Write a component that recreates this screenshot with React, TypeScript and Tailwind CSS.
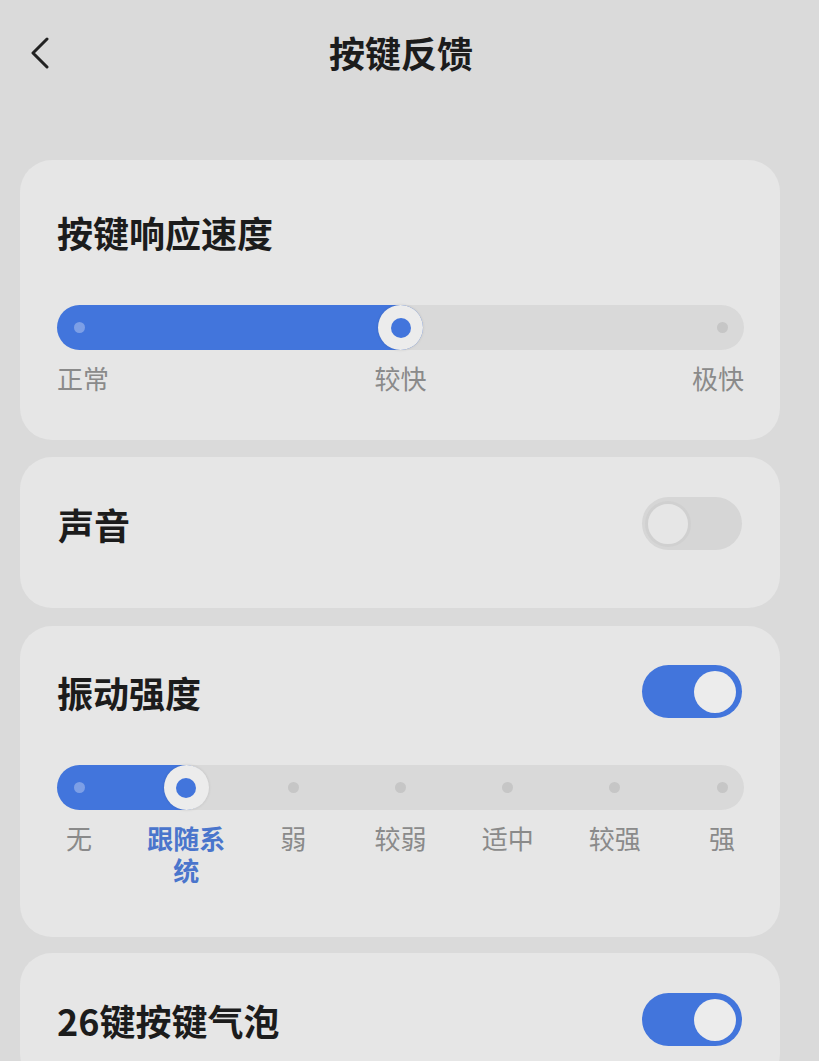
import React from "react"

function Toggle({ on }: { on: boolean }) {
  return on ? (
    <div className="w-[100px] h-[53px] rounded-full bg-[#4275dc] flex items-center justify-end pr-[6px] shrink-0">
      <div className="w-[42px] h-[42px] rounded-full bg-[#ececec]" />
    </div>
  ) : (
    <div className="w-[100px] h-[53px] rounded-full bg-[#d6d6d6] flex items-center pl-[3px] shrink-0">
      <div className="w-[46px] h-[46px] rounded-full bg-[#e6e6e6] border-[3px] border-[#d0d0d0]" />
    </div>
  )
}

function Slider({ stops, value }: { stops: number; value: number }) {
  const W = 687
  const pos = (i: number) => 22 + (i * (W - 44)) / (stops - 1)
  return (
    <div className="relative h-[45px] w-[687px] rounded-full bg-[#d9d9d9]">
      <div
        className="absolute left-0 top-0 h-full rounded-full bg-[#4275dc]"
        style={{ width: pos(value) + 22 }}
      />
      {Array.from({ length: stops }).map((_, i) =>
        i === value ? null : (
          <div
            key={i}
            className={
              "absolute top-1/2 w-[11px] h-[11px] -ml-[5.5px] -mt-[5.5px] rounded-full " +
              (i < value ? "bg-[#7d9fe6]" : "bg-[#c6c6c6]")
            }
            style={{ left: pos(i) }}
          />
        )
      )}
      <div
        className="absolute top-0 w-[45px] h-[45px] -ml-[22.5px] rounded-full bg-[#ececec] shadow-[0_0_3px_rgba(0,0,0,0.12)] flex items-center justify-center"
        style={{ left: pos(value) }}
      >
        <div className="w-[20px] h-[20px] rounded-full bg-[#4275dc]" />
      </div>
    </div>
  )
}

const vibLabels = ["无", "跟随系统", "弱", "较弱", "适中", "较强", "强"]

export default function App() {
  return (
    <div
      className="min-h-screen w-[819px] bg-[#dadada] overflow-hidden"
      style={{ fontFamily: '"Noto Sans CJK SC", "Noto Sans", sans-serif' }}
    >
      {/* Header */}
      <header className="relative h-[160px] pt-[28px]">
        <div className="flex h-[48px] items-center justify-center pr-[17px]">
          <span className="text-[36px] leading-[48px] font-bold text-[#1c1c1c]">按键反馈</span>
        </div>
        <svg
          className="absolute left-[28px] top-[37px]"
          width="24"
          height="32"
          viewBox="0 0 24 32"
          fill="none"
        >
          <path d="M19 2 L5 16 L19 30" stroke="#222" strokeWidth="3" strokeLinecap="round" strokeLinejoin="round" />
        </svg>
      </header>

      <div className="ml-[20px] w-[760px] flex flex-col">
        {/* 按键响应速度 */}
        <section className="rounded-[32px] bg-[#e6e6e6] px-[37px] pt-[50px] pb-[45px]">
          <div className="text-[36px] leading-[44px] font-bold text-[#1c1c1c]">按键响应速度</div>
          <div className="mt-[51px]">
            <Slider stops={3} value={1} />
          </div>
          <div className="mt-[11px] w-[687px] flex justify-between text-[26px] leading-[34px] text-[#8a8a8a]">
            <span>正常</span>
            <span>较快</span>
            <span>极快</span>
          </div>
        </section>

        {/* 声音 */}
        <section className="mt-[17px] h-[151px] rounded-[32px] bg-[#e6e6e6] px-[38px] pt-[40px]">
          <div className="h-[53px] flex items-center justify-between">
            <span className="text-[36px] leading-[44px] font-bold text-[#1c1c1c]">声音</span>
            <Toggle on={false} />
          </div>
        </section>

        {/* 振动强度 */}
        <section className="mt-[18px] rounded-[32px] bg-[#e6e6e6] pl-[37px] pr-[38px] pt-[39px] pb-[51px]">
          <div className="h-[53px] flex items-center justify-between">
            <span className="text-[36px] leading-[44px] font-bold text-[#1c1c1c]">振动强度</span>
            <Toggle on={true} />
          </div>
          <div className="mt-[47px]">
            <Slider stops={7} value={1} />
          </div>
          <div className="mt-[12px] w-[687px] px-[22px] flex justify-between">
            {vibLabels.map((l, i) => (
              <div key={l} className="w-0 flex justify-center">
                <div
                  className={
                    "shrink-0 text-center text-[26px] leading-[32px] " +
                    (i === 1 ? "w-[84px] font-bold text-[#4a75cc]" : "whitespace-nowrap text-[#8a8a8a]")
                  }
                >
                  {l}
                </div>
              </div>
            ))}
          </div>
        </section>

        {/* 26键按键气泡 */}
        <section className="mt-[16px] rounded-[32px] bg-[#e6e6e6] pl-[37px] pr-[38px] pt-[40px] pb-[40px]">
          <div className="h-[53px] flex items-center justify-between">
            <span className="text-[36px] leading-[44px] font-bold text-[#1c1c1c]">26键按键气泡</span>
            <Toggle on={true} />
          </div>
        </section>
      </div>
    </div>
  )
}
